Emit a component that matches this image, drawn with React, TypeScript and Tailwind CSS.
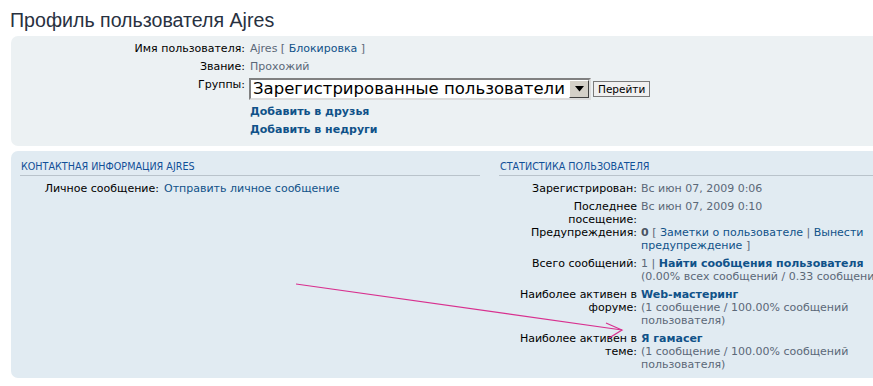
import React from 'react';

const font = { fontFamily: '"DejaVu Sans", Verdana, sans-serif' };

const Row = ({ label, children }: { label: React.ReactNode; children: React.ReactNode }) => (
  <>
    <div className="text-right text-black">{label}</div>
    <div className="mb-[5px]">{children}</div>
  </>
);

const Link = ({ children, bold = false }: { children: React.ReactNode; bold?: boolean }) => (
  <span className={`text-[#105289] ${bold ? 'font-bold' : ''}`}>{children}</span>
);

export default function App() {
  return (
    <div className="relative w-[873px] h-[386px] overflow-hidden bg-white text-[11px] leading-[13px] text-[#5b6878]" style={font}>
      <div className="pl-[10px] w-[960px]">
        {/* heading */}
        <h2
          className="mt-[8px] mb-[4px] text-[19.6px] leading-[24px] text-[#28313f]"
          style={{ fontFamily: '"Liberation Sans", Arial, sans-serif' }}
        >
          Профиль пользователя Ajres
        </h2>

        {/* top panel */}
        <div className="ml-px rounded-[7px] bg-[#ecf1f3] pt-[6px] pb-[10px] pl-[10px]">
          <div className="grid grid-cols-[224px_1fr] gap-x-[5px]">
            <Row label="Имя пользователя:">
              Ajres [ <Link>Блокировка</Link> ]
            </Row>
            <Row label="Звание:">Прохожий</Row>
            <Row label="Группы:">
              <div className="flex items-start -ml-px">
                <div className="flex h-[22px] w-[342px] items-center border-2 border-t-[#808080] border-l-[#808080] border-b-[#dcdcdc] border-r-[#dcdcdc] bg-white">
                  <span className="flex-1 pl-[2px] text-[16.5px] leading-[18px] text-black">Зарегистрированные пользователи</span>
                  <span className="flex h-[18px] w-[20px] items-center justify-center border border-t-white border-l-white border-b-[#404040] border-r-[#404040] bg-[#d4d0c8]">
                    <svg width="9" height="6" viewBox="0 0 9 6">
                      <path d="M0 0h9L4.5 5.5z" fill="#000" />
                    </svg>
                  </span>
                </div>
                <button className="ml-[2px] mt-[3px] h-[16px] border border-[#7a7a7a] bg-[#f0f0f0] px-[4px] text-[10.5px] leading-[13px] text-black">
                  Перейти
                </button>
              </div>
            </Row>
            <div />
            <div className="mb-[5px]"><Link bold>Добавить в друзья</Link></div>
            <div />
            <div><Link bold>Добавить в недруги</Link></div>
          </div>
        </div>

        {/* bottom panel */}
        <div className="mt-[5px] ml-px flex h-[227px] rounded-[7px] bg-[#e1ebf2] pt-[10px] pl-[9px]">
          <div className="w-[460px]">
            <h3 className="border-b border-[#b9c3cb] pb-[2px] pl-px text-[9.6px] leading-[12px] uppercase text-[#115098]">
              Контактная информация Ajres
            </h3>
            <div className="mt-[6px] grid grid-cols-[139px_1fr] gap-x-[5px]">
              <Row label="Личное сообщение:">
                <Link>Отправить личное сообщение</Link>
              </Row>
            </div>
          </div>

          <div className="ml-[19px] w-[440px]">
            <h3 className="border-b border-[#b9c3cb] pb-[2px] pl-px text-[9.6px] leading-[12px] uppercase text-[#115098]">
              Статистика пользователя
            </h3>
            <div className="mt-[6px] grid grid-cols-[138px_280px] gap-x-[4px]">
              <Row label="Зарегистрирован:">Вс июн 07, 2009 0:06</Row>
              <Row label={<>Последнее<br />посещение:</>}>Вс июн 07, 2009 0:10</Row>
              <Row label="Предупреждения:">
                <b className="text-[#4a5563]">0</b> [ <Link>Заметки о пользователе</Link> | <Link>Вынести предупреждение</Link> ]
              </Row>
              <Row label="Всего сообщений:">
                <div className="whitespace-nowrap">
                  1 | <Link bold>Найти сообщения пользователя</Link>
                </div>
                <div className="whitespace-nowrap">(0.00% всех сообщений / 0.33 сообщений в день)</div>
              </Row>
              <Row label={<>Наиболее активен в<br />форуме:</>}>
                <Link bold>Web-мастеринг</Link>
                <br />
                (1 сообщение / 100.00% сообщений пользователя)
              </Row>
              <Row label={<>Наиболее активен в<br />теме:</>}>
                <Link bold>Я гамасег</Link>
                <br />
                (1 сообщение / 100.00% сообщений пользователя)
              </Row>
            </div>
          </div>
        </div>
      </div>

      {/* pink annotation arrow */}
      <svg className="absolute left-0 top-0 pointer-events-none" width="873" height="386">
        <g stroke="#d8308f" strokeWidth="1.2" fill="none">
          <path d="M296 284 L622 330" />
          <path d="M606 323 L622 330 L609 338" />
        </g>
      </svg>
    </div>
  );
}
